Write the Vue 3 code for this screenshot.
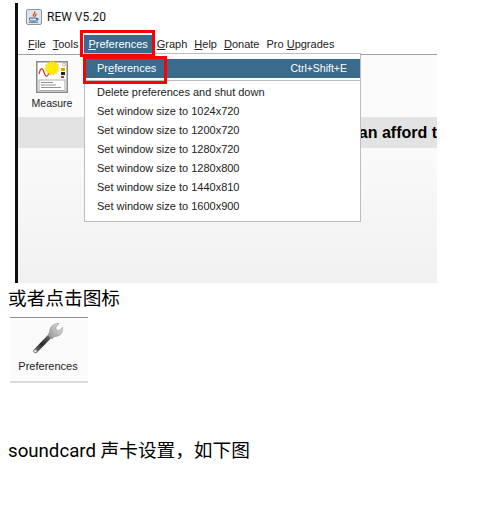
<template>
  <div class="page">
    <div class="shot">
      <div class="title-row">
        <svg class="java-icon" width="16" height="16" viewBox="0 0 16 16">
          <rect x="0.5" y="0.5" width="15" height="15" rx="1.5" fill="#dfe4ea" stroke="#8d97a3" />
          <path d="M8.500 2.500c1.500 2-2.500 3-1 5 M10 4.500c1 1.500-2 2-.8 3.500" fill="none" stroke="#d9531e" stroke-width="1.300" />
          <path d="M3.500 9h7v1.500c0 1-1 1.500-2 1.500h-3c-1 0-2-.5-2-1.500z M10.500 9.500h1.500v1.500h-1.500" fill="none" stroke="#3f6f96" />
          <path d="M3 13.200h9" stroke="#3f6f96" />
        </svg>
        <span class="title">REW V5.20</span>
      </div>

      <div class="menubar">
        <span v-for="item in menus" :key="item.after" class="menu" :class="{ active: item.active }">{{ item.before }}<u>{{ item.key }}</u>{{ item.after }}</span>
      </div>

      <div class="toolbar">
        <div class="tool">
          <svg class="measure-icon" width="32" height="32" viewBox="0 0 32 32">
            <rect x="0.750" y="0.750" width="30.500" height="30.500" fill="#fff" stroke="#8a8a8a" stroke-width="1.500" />
            <path d="M3 13c1.500-6 3-7 4.500-3s2.500 7 4.500 4 2-5 4-3" fill="none" stroke="#c9302c" stroke-width="1.200" />
            <circle cx="28" cy="3.500" r="1.500" fill="#fff" stroke="#c98080" stroke-width="0.700" />
            <rect x="25" y="7" width="4" height="3" fill="#d0a800" />
            <rect x="25" y="11" width="4" height="3" fill="#222" />
            <rect x="25" y="15" width="3" height="2" fill="#c9302c" />
            <rect x="3" y="19" width="26" height="10.500" fill="#fff" stroke="#999" stroke-width="0.800" />
            <path d="M5 21.500h12M5 24h15M5 26.500h20" stroke="#777" stroke-width="0.800" />
            <polygon :points="sunPoints" fill="#ffec00" stroke="#f4c400" stroke-width="0.400" />
          </svg>
          <span class="tool-label">Measure</span>
        </div>
      </div>

      <div class="banner"><span>an afford t</span></div>
      <div class="lower"></div>

      <div class="popup">
        <div class="popup-item selected">
          <span>Pr<u>e</u>ferences</span>
          <span class="shortcut">Ctrl+Shift+E</span>
        </div>
        <div class="popup-sep"></div>
        <div v-for="row in rows" :key="row" class="popup-item">{{ row }}</div>
      </div>

      <div class="red-box box-menu"></div>
      <div class="red-box box-item"></div>
    </div>

    <p class="line first">或者点击图标</p>

    <div class="pref-tile">
      <svg class="wrench" width="34" height="34" viewBox="0 0 34 34">
        <defs>
          <linearGradient id="handle" gradientUnits="userSpaceOnUse" x1="3" y1="29" x2="21" y2="10">
            <stop offset="0" stop-color="#777" />
            <stop offset="0.400" stop-color="#2a2a2a" />
            <stop offset="0.750" stop-color="#5a5a5a" />
            <stop offset="1" stop-color="#b5b5b5" />
          </linearGradient>
          <linearGradient id="head" x1="0" y1="1" x2="1" y2="0">
            <stop offset="0" stop-color="#8f8f8f" />
            <stop offset="1" stop-color="#e4e4e4" />
          </linearGradient>
        </defs>
        <path d="M19 12 L3.500 28" stroke="url(#handle)" stroke-width="4.500" stroke-linecap="round" />
        <circle cx="3.500" cy="28" r="1.200" fill="#eee" />
        <path d="M17.500 9C17.500 4 21.500 0 27 .5L24 4 24 7 27 7.500 30.500 4.500C31.500 9.500 27.500 14 22.500 13.500L20 16 16 12.500z" fill="url(#head)" stroke="#888" stroke-width="0.500" />
      </svg>
      <span class="tile-label">Preferences</span>
    </div>

    <p class="line second">soundcard 声卡设置，如下图</p>
  </div>
</template>

<script setup>
const menus = [
  { before: "", key: "F", after: "ile" },
  { before: "", key: "T", after: "ools" },
  { before: "", key: "P", after: "references", active: true },
  { before: "", key: "G", after: "raph" },
  { before: "", key: "H", after: "elp" },
  { before: "", key: "D", after: "onate" },
  { before: "Pro ", key: "U", after: "pgrades" },
];

const rows = [
  "Delete preferences and shut down",
  "Set window size to 1024x720",
  "Set window size to 1200x720",
  "Set window size to 1280x720",
  "Set window size to 1280x800",
  "Set window size to 1440x810",
  "Set window size to 1600x900",
];

// little starburst on the Measure icon
const sunPoints = Array.from({ length: 28 }, (_, i) => {
  const r = i % 2 ? 5.5 : 7.5;
  const a = (i / 28) * Math.PI * 2;
  return `${(16 + r * Math.cos(a)).toFixed(2)},${(7 + r * Math.sin(a)).toFixed(2)}`;
}).join(" ");
</script>

<style>
body {
  background: #fff;
}
</style>

<style scoped>
.page {
  width: 491px;
  height: 517px;
  padding-top: 3px;
  box-sizing: border-box;
  overflow: hidden;
  font-family: "Liberation Sans", Arial, sans-serif;
}

.shot {
  position: relative;
  display: flex;
  flex-direction: column;
  box-sizing: border-box;
  width: 422px;
  height: 280px;
  margin-left: 15px;
  border-left: 3px solid #0d0d14;
  background: #fff;
  overflow: hidden;
}

.title-row {
  display: flex;
  align-items: center;
  gap: 5px;
  height: 27px;
  padding: 0 0 4px 8px;
  flex: none;
}

.title {
  font-family: Roboto, sans-serif;
  font-size: 12px;
  color: #111;
}

.menubar {
  display: flex;
  align-items: center;
  height: 20px;
  flex: none;
  padding-left: 10px;
  font-size: 11px;
  color: #222;
  gap: 7px;
  border-bottom: 1px solid #9a9fa3;
}

.menu.active {
  background: #3a6a8c;
  color: #fff;
  padding: 3px 5px 4px 4px;
  margin: 0 -3px 0 -1px;
}

.toolbar {
  height: 62px;
  flex: none;
  background: #fbfbfb;
  padding: 6px 0 0 10px;
  box-sizing: border-box;
}

.tool {
  display: flex;
  flex-direction: column;
  align-items: center;
  width: 48px;
  gap: 4px;
}

.measure-icon {
  overflow: visible;
}

.tool-label {
  font-size: 10.500px;
  color: #222;
}

.banner {
  display: flex;
  justify-content: flex-end;
  align-items: center;
  height: 31px;
  flex: none;
  background: #e3e3e3;
  overflow: hidden;
  white-space: nowrap;
  font-size: 16px;
  font-weight: 700;
  color: #000;
}

.lower {
  flex: 1;
  background: linear-gradient(#fafafa, #f1f1f1);
}

.popup {
  position: absolute;
  left: 66px;
  top: 50px;
  box-sizing: border-box;
  width: 277px;
  height: 169px;
  padding-top: 5px;
  background: #fff;
  border: 1px solid #bdbdbd;
  font-size: 11px;
  color: #222;
}

.popup-item {
  display: flex;
  align-items: center;
  justify-content: space-between;
  height: 19px;
  padding: 0 13px 0 12px;
  white-space: nowrap;
}

.popup-item.selected {
  box-sizing: border-box;
  padding-bottom: 1px;
  background: #3a6a8c;
  color: #fff;
}

.shortcut {
  font-size: 10.500px;
}

.popup-sep {
  height: 1px;
  margin: 2px 0 1px;
  background: #bdbdbd;
}

.red-box {
  position: absolute;
  box-sizing: border-box;
  border: 3px solid #f00;
  pointer-events: none;
}

.box-menu {
  left: 62px;
  top: 27px;
  width: 75px;
  height: 27px;
}

.box-item {
  left: 65px;
  top: 53px;
  width: 84px;
  height: 28px;
}

.line {
  margin: 0 0 0 8px;
  font-size: 18.670px;
  line-height: 30px;
  color: #000;
  font-family: Roboto, "Noto Sans CJK SC", sans-serif;
}

.first {
  height: 34px;
  line-height: 32px;
}

.pref-tile {
  display: flex;
  flex-direction: column;
  align-items: center;
  box-sizing: border-box;
  width: 78px;
  height: 66px;
  margin-left: 10px;
  padding-top: 5px;
  background: #fbfbfb;
  border-top: 1px solid #8f8f96;
  border-bottom: 2px solid #dcdcdc;
}

.wrench {
  overflow: visible;
}

.tile-label {
  font-size: 11px;
  color: #222;
  margin: 3px 2px 0 0;
}

.second {
  margin-top: 53px;
}
</style>
